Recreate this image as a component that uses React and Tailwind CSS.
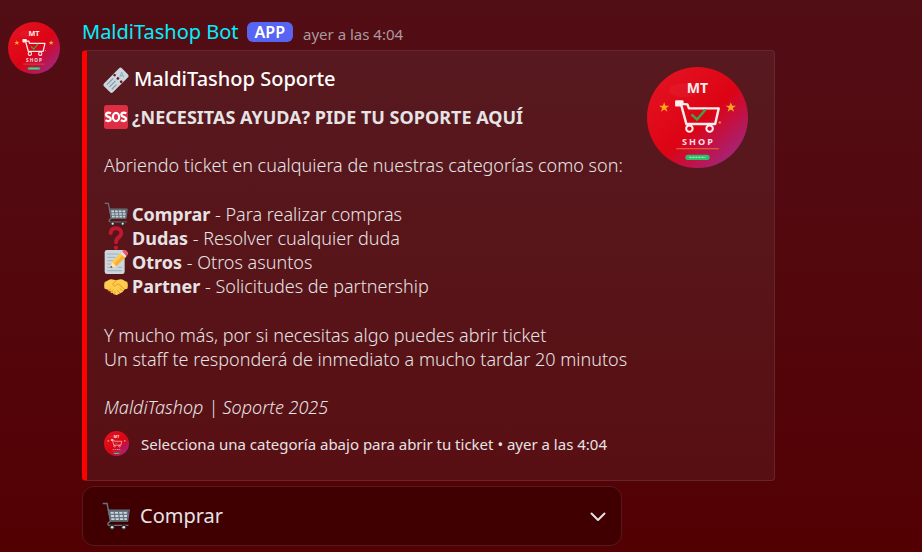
const Logo = ({ className }) => (
    <svg className={className} viewBox="0 0 100 100" role="img" aria-label="MaldiTashop">
        <defs>
            <linearGradient id="logoBg" x1="0.2" y1="0.1" x2="0.95" y2="0.9">
                <stop offset="0" stopColor="#e3101f" />
                <stop offset="0.5" stopColor="#dc0414" />
                <stop offset="0.72" stopColor="#c01249" />
                <stop offset="1" stopColor="#9b2a86" />
            </linearGradient>
        </defs>
        <circle cx="50" cy="50" r="50" fill="url(#logoBg)" />
        <ellipse cx="36" cy="23" rx="14" ry="7" fill="#fff" opacity="0.04" />
        <text x="50" y="26" textAnchor="middle" fontSize="14" fontWeight="700" fill="#fbeaec">MT</text>
        <path d="M17 35l1.300 3.400h3.700l-3 2.200 1.200 3.600-3.200-2.200-3.200 2.200 1.200-3.600-3-2.200h3.700zM83 35l1.300 3.400h3.700l-3 2.200 1.200 3.600-3.200-2.200-3.200 2.200 1.200-3.600-3-2.200h3.700z" fill="#fba61c" />
        <path d="M29 34h6v2.500l5 .5 1.500 4H71l-3.500 15.500H39L34 38h-5z" fill="none" stroke="#fdecee" strokeWidth="2.400" strokeLinejoin="round" />
        <path d="M29 34h6v4h-6z" fill="#fdecee" />
        <circle cx="42" cy="61" r="3.200" fill="none" stroke="#fdecee" strokeWidth="2" />
        <circle cx="62" cy="61" r="3.200" fill="none" stroke="#fdecee" strokeWidth="2" />
        <path d="M44 47l5.500 5L58 42" fill="none" stroke="#3fa34d" strokeWidth="2.400" />
        <circle cx="72" cy="55" r="1.300" fill="#f58220" />
        <text x="51" y="77" textAnchor="middle" fontSize="9" fontWeight="700" className="tracking-[2px]" fill="#fbdfe3">SHOP</text>
        <path d="M29 81h42" stroke="#e8742c" strokeWidth="1" />
        <rect x="38" y="87" width="24" height="5" rx="2.500" fill="#2bbf6a" />
        <path d="M42 89.500h16" stroke="#a6ecc3" strokeWidth="1.200" strokeDasharray="2 1" />
    </svg>
);

const Ticket = ({ className }) => (
    <svg className={className} viewBox="0 0 36 36" aria-hidden="true">
        <g transform="rotate(-45 18 20)">
            <rect x="-1" y="10.500" width="38" height="19" rx="3" fill="#ccd6dd" />
            <path d="M4 15h13M4 20h13M4 25h10" stroke="#8899a6" strokeWidth="1.800" />
            <circle cx="22" cy="13" r="2" fill="#6b1a25" />
            <circle cx="22" cy="20" r="2" fill="#6b1a25" />
            <circle cx="22" cy="27" r="2" fill="#6b1a25" />
            <g transform="rotate(45 30 20)">
                <path d="M27 24l3-8 3 8M28 21.500h4" fill="none" stroke="#99aab5" strokeWidth="1.500" />
            </g>
        </g>
    </svg>
);

const Sos = ({ className }) => (
    <svg className={className} viewBox="0 0 36 36" aria-hidden="true">
        <rect width="36" height="36" rx="4" fill="#dd2e44" />
        <g fill="none" stroke="#fff" strokeWidth="3.400">
            <path d="M10.500 12.500C6 10.500 3 12 3 14.500c0 4 7.200 2.500 7.200 6.500 0 3-4 4-8 2" />
            <ellipse cx="18" cy="18" rx="4.700" ry="6.200" />
            <path d="M33.500 12.500c-4.500-2-7.500-.5-7.500 2 0 4 7.200 2.500 7.200 6.500 0 3-4 4-8 2" />
        </g>
    </svg>
);

const Cart = ({ className }) => (
    <svg className={className} viewBox="0 0 36 36" aria-hidden="true">
        <path d="M9 11h25l-1.500 13H11z" fill="#66757f" />
        <path d="M11 14h22M11.500 18h21M12 22h20" stroke="#ccd6dd" strokeWidth="2.400" strokeDasharray="4 1.600" />
        <path d="M8 10.500h27L33 24.500H11z" fill="none" stroke="#66757f" strokeWidth="1.500" />
        <path d="M1 2h5.500L11 24.500l-3 2.500c-1 2 0 3 2 3h24" fill="none" stroke="#66757f" strokeWidth="1.800" />
        <circle cx="13" cy="32.500" r="3.300" fill="#292f33" />
        <circle cx="28" cy="32.500" r="3.300" fill="#292f33" />
        <circle cx="13" cy="32.500" r="1.700" fill="#e1e8ed" />
        <circle cx="28" cy="32.500" r="1.700" fill="#e1e8ed" />
    </svg>
);

const Question = ({ className }) => (
    <svg className={className} viewBox="0 0 36 36" aria-hidden="true">
        <path d="M10 10.500C10.500 5.500 14 3.500 18 3.500c5 0 8 3 8 7 0 6.500-8 6-8 14" fill="none" stroke="#be1931" strokeWidth="6" strokeLinecap="round" />
        <circle cx="18" cy="32.800" r="3.200" fill="#be1931" />
    </svg>
);

const Memo = ({ className }) => (
    <svg className={className} viewBox="0 0 36 36" aria-hidden="true">
        <rect x="1" width="30" height="36" rx="3.500" fill="#ccd6dd" />
        <path d="M5 6h17M5 11h12M5 16h8M5 21h5M5 26h4M21 26h6M5 31h22" stroke="#99aab5" strokeWidth="1.300" />
        <path d="M9.500 27l2.500-9L26.500 3.500l6.500 6.500L18.500 24.500z" fill="#ffac33" />
        <path d="M12 18L26.500 3.500l3 3L15 21z" fill="#ffcc4d" />
        <path d="M9.500 27l2.500-9 6.500 6.500z" fill="#ffe8b6" />
        <path d="M9.500 27l1-3.500 2.500 2.500z" fill="#292f33" />
        <path d="M25 5l2.500-2.500 6.500 6.500-2.500 2.500z" fill="#e1e8ed" />
        <path d="M27.500 2.500C30-.5 32-.5 34.500 2s2 4.500-.5 7z" fill="#ea596e" />
    </svg>
);

const Handshake = ({ className }) => (
    <svg className={className} viewBox="0 0 36 36" aria-hidden="true">
        <path d="M1 12c4-1 7-4 10-4s5 1.500 7 1.500S22 8 25 8s6 3 10 4c1 4 1 7 0 10l-4 1-3 4-8 4c-2 1-4 0-5-1L7 24l-6-2c-1-3-1-6 0-10z" fill="#ffcc4d" />
        <path d="M18 10l-5 5.500c1 3 4 3 6 .5l3-1 8 7.500M24 22l4 3.500M20 24.500l3.500 3.500" fill="none" stroke="#e39a24" strokeWidth="1.500" strokeLinecap="round" />
        <path d="M9.500 22.500L7.500 25M13 24.500l-2 3M16.500 27l-1.500 2.500" stroke="#f4ae35" strokeWidth="2.400" strokeLinecap="round" />
    </svg>
);

const categories = [
    { icon: Cart, name: "Comprar", description: "Para realizar compras" },
    { icon: Question, name: "Dudas", description: "Resolver cualquier duda" },
    { icon: Memo, name: "Otros", description: "Otros asuntos" },
    { icon: Handshake, name: "Partner", description: "Solicitudes de partnership" },
];

const App = () => {
    return (
        <main className="flex min-h-screen items-start bg-linear-to-b from-[#520e15] to-[#530003] pt-5 pl-2 font-['Noto_Sans',sans-serif] text-[#e6e3e5]">
            <Logo className="mt-0.5 mr-[22px] size-[52px] shrink-0" />

            <div className="min-w-0 flex-1 pr-4">
                <header className="flex h-[30px] items-start">
                    <h1 className="text-xl leading-6 text-[#00f0ff]">MaldiTashop Bot</h1>
                    <span className="mt-0.5 ml-2 rounded-md bg-[#5865f2] px-2 text-base leading-5 font-semibold text-white">APP</span>
                    <time className="ml-2.5 text-[15px] leading-7 text-[#aa9a9e]">ayer a las 4:04</time>
                </header>

                <article className="flex w-full max-w-[693px] items-start rounded border border-l-[5px] border-[#66272c] border-l-[#ff0000] bg-linear-to-b from-[#57191f] to-[#580f13] pt-4 pr-[26px] pb-6 pl-[17px]">
                    <div className="min-w-0 flex-1 text-lg leading-6 font-light">
                        <h2 className="flex items-center gap-1.5 text-xl leading-6 font-medium text-white">
                            <Ticket className="size-6 shrink-0 overflow-visible" />
                            MaldiTashop Soporte
                        </h2>
                        <p className="mt-3.5 flex items-center gap-1 font-bold">
                            <Sos className="size-6 shrink-0" />
                            ¿NECESITAS AYUDA? PIDE TU SOPORTE AQUÍ
                        </p>
                        <p className="mt-6">Abriendo ticket en cualquiera de nuestras categorías como son:</p>
                        <ul className="mt-[25px]">
                            {categories.map(({ icon: Icon, name, description }) => (
                                <li key={name} className="flex items-center gap-1">
                                    <Icon className="size-6 shrink-0" />
                                    <span><strong className="font-bold">{name}</strong> - {description}</span>
                                </li>
                            ))}
                        </ul>
                        <p className="mt-[25px]">
                            Y mucho más, por si necesitas algo puedes abrir ticket
                            <br />
                            Un staff te responderá de inmediato a mucho tardar 20 minutos
                        </p>
                        <p className="mt-6 italic">MaldiTashop | Soporte 2025</p>
                        <footer className="mt-3 flex items-center gap-3 text-[15px] leading-6 font-normal">
                            <Logo className="size-[25px] shrink-0" />
                            <span>Selecciona una categoría abajo para abrir tu ticket • ayer a las 4:04</span>
                        </footer>
                    </div>
                    <Logo className="size-[101px] shrink-0" />
                </article>

                <div className="relative mt-[5px] w-full max-w-[540px]">
                    <Cart className="pointer-events-none absolute top-4 left-5 size-7" />
                    <select aria-label="Categoría" defaultValue="Comprar" className="h-[60px] w-full appearance-none rounded-xl border border-[#57191d] bg-[#400002] pr-12 pl-[57px] text-xl">
                        {categories.map(({ name }) => (
                            <option key={name}>{name}</option>
                        ))}
                    </select>
                    <svg className="pointer-events-none absolute top-[18px] right-3 size-6" viewBox="0 0 24 24" fill="none" stroke="currentColor" strokeWidth="2" strokeLinecap="round" strokeLinejoin="round" aria-hidden="true">
                        <path d="M5.500 9.500l6.500 6.500 6.500-6.500" />
                    </svg>
                </div>
            </div>
        </main>
    );
};

export default App;
